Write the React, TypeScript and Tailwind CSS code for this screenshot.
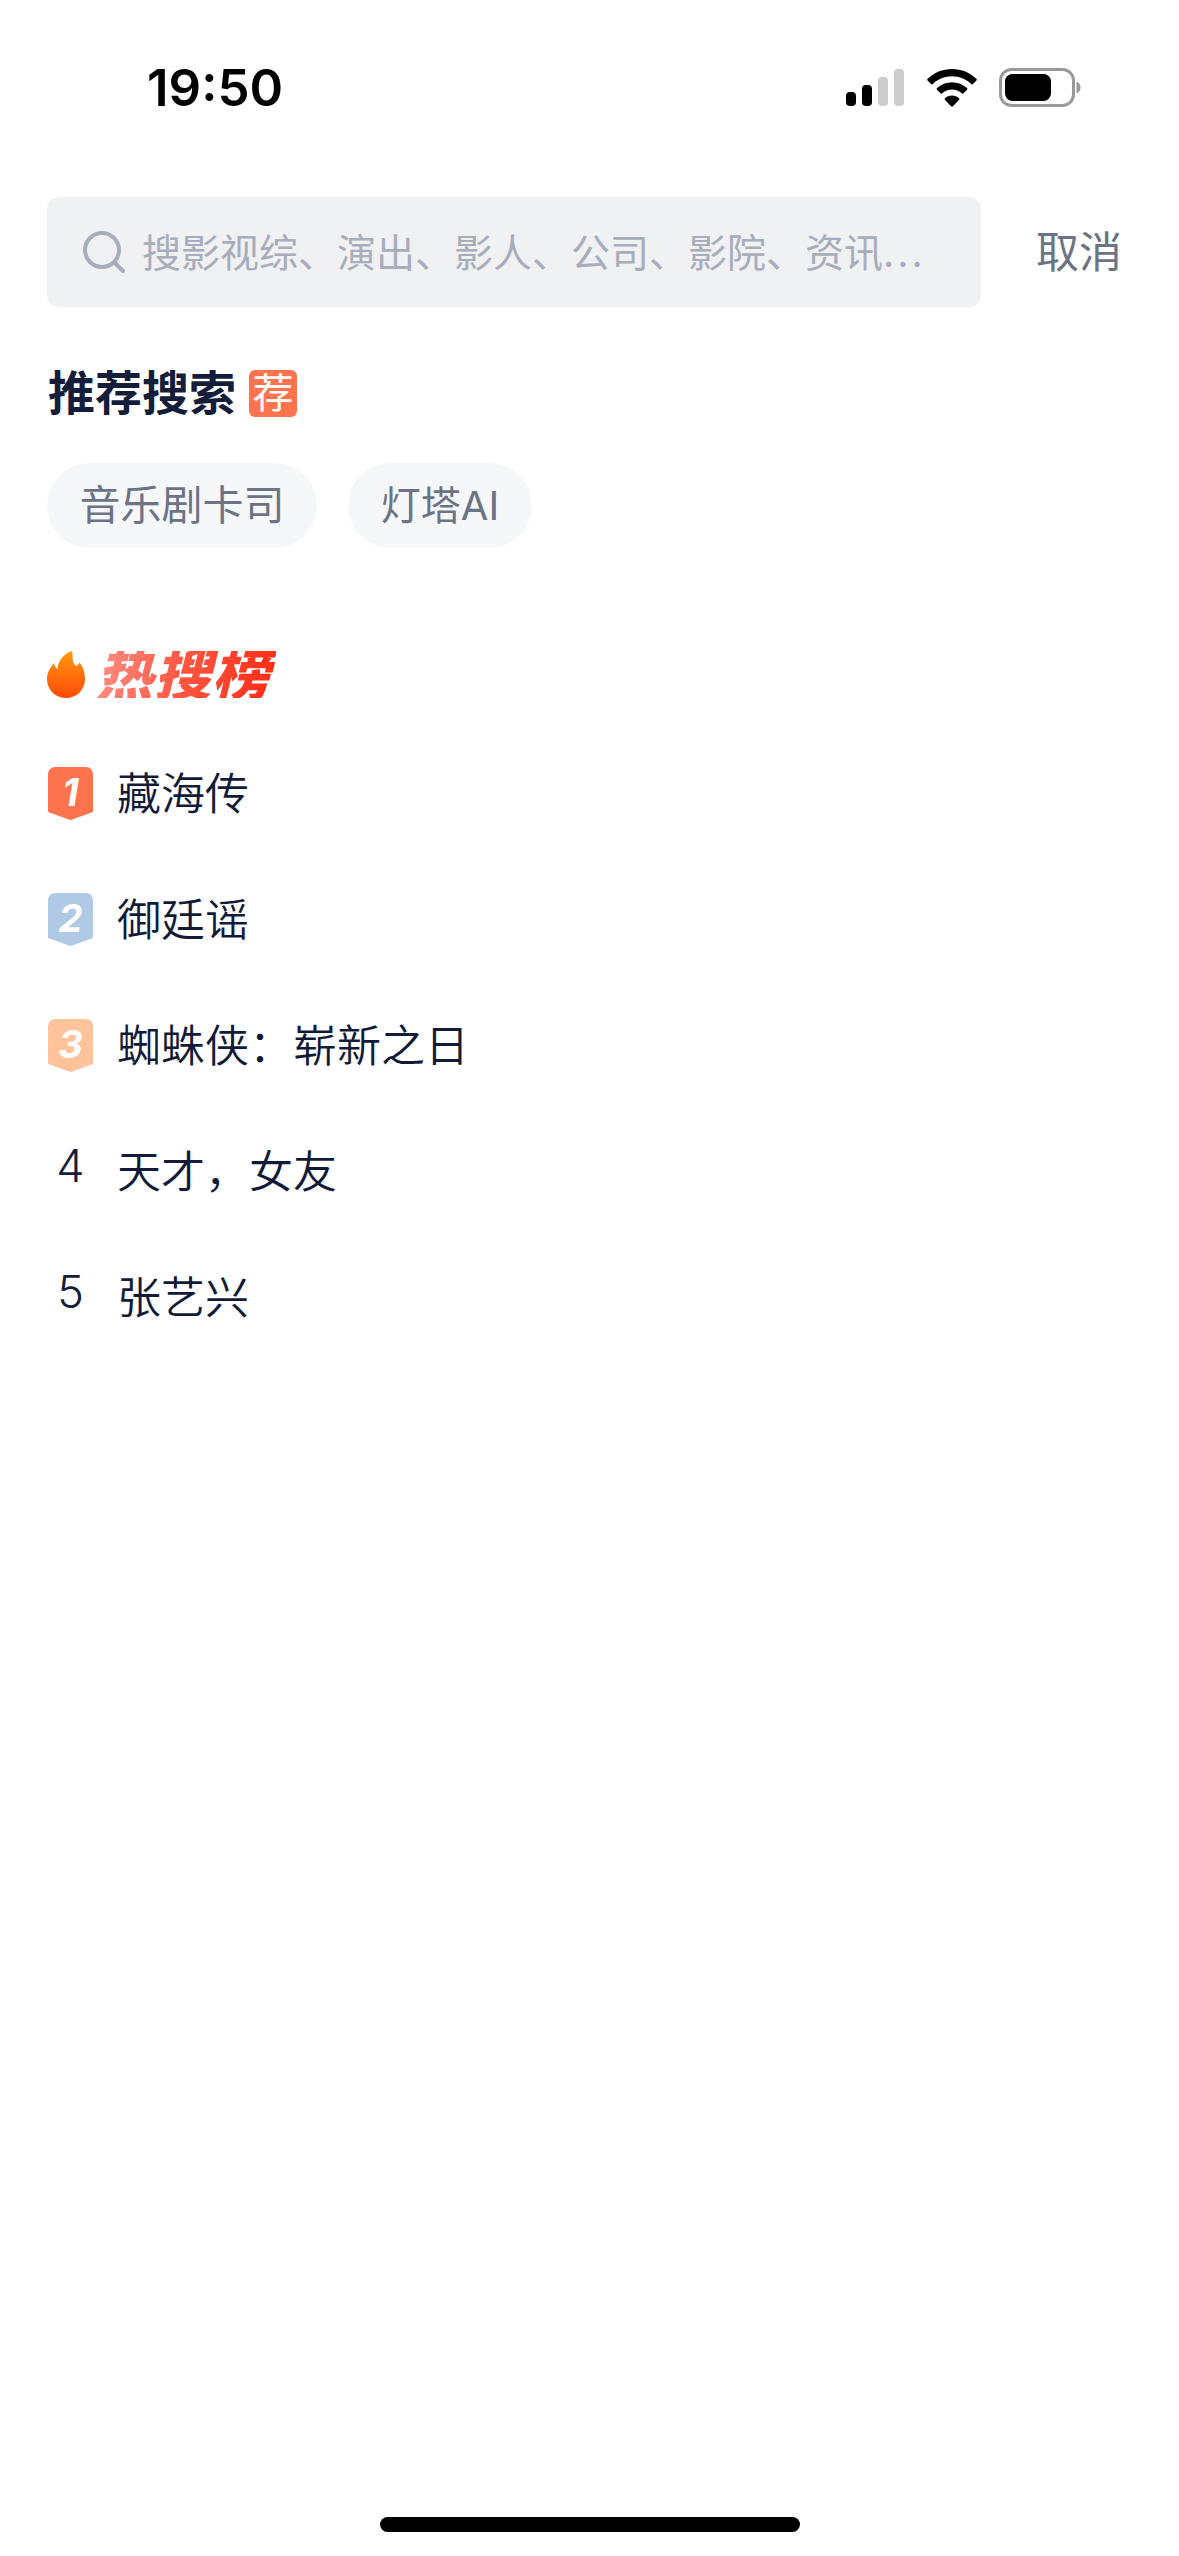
const RANKS = [
  { label: '藏海传', top: 1 },
  { label: '御廷谣', top: 2 },
  { label: '蜘蛛侠：崭新之日', top: 3 },
  { label: '天才，女友' },
  { label: '张艺兴' },
]

const SHIELD_COLORS: Record<number, string> = {
  1: 'text-[#ff734f]',
  2: 'text-[#b0c9e4]',
  3: 'text-[#ffc39b]',
}

function StatusIcons() {
  return (
    <div className="flex items-center">
      <svg width="58" height="38" viewBox="0 0 58 38">
        <rect x="0" y="23" width="10" height="14" rx="4" fill="#000" />
        <rect x="16" y="16" width="10" height="21" rx="4" fill="#000" />
        <rect x="32" y="8" width="10" height="29" rx="4" fill="#ccc" />
        <rect x="48" y="0" width="10" height="37" rx="4" fill="#ccc" />
      </svg>
      <svg className="ml-[23px]" width="50" height="38" viewBox="0 0 50 38">
        <path d="M25 0C15.5 0 7 3.7 0.6 9.8c-.5.5-.5 1.2 0 1.7l3.4 3.5c.5.5 1.2.5 1.7 0C10.8 10.2 17.6 7.3 25 7.3s14.2 2.9 19.3 7.7c.5.5 1.2.5 1.7 0l3.4-3.5c.5-.5.5-1.2 0-1.7C43 3.7 34.500 0 25 0z" fill="#000" />
        <path d="M25 13.200c-5.800 0-11 2.200-15 5.900-.5.500-.5 1.200 0 1.700l3.500 3.500c.5.500 1.200.5 1.700 0 2.600-2.300 6-3.800 9.800-3.800s7.200 1.500 9.800 3.800c.5.500 1.200.5 1.700 0l3.500-3.500c.5-.5.5-1.200 0-1.700-4-3.700-9.200-5.900-15-5.900z" fill="#000" />
        <path d="M25 26.500c-2.700 0-5.200 1-7 2.700-.5.500-.5 1.200 0 1.700l6.100 6.300c.5.500 1.300.5 1.800 0l6.100-6.300c.5-.5.5-1.200 0-1.700-1.800-1.700-4.300-2.700-7-2.700z" fill="#000" />
      </svg>
      <svg className="ml-[22px]" width="82" height="39" viewBox="0 0 82 39">
        <rect x="1.500" y="1.500" width="73" height="36" rx="11" fill="none" stroke="#999" strokeWidth="3" />
        <rect x="6" y="6" width="46" height="27" rx="7.500" fill="#000" />
        <path d="M77.500 13.500c2.500.8 4 3.200 4 6s-1.500 5.200-4 6z" fill="#999" />
      </svg>
    </div>
  )
}

function RankBadge({ rank }: { rank: number }) {
  return (
    <div className={`relative h-[53px] w-[45px] ${SHIELD_COLORS[rank]}`}>
      <svg className="absolute inset-0" width="45" height="53" viewBox="0 0 45 53">
        <path
          d="M7 0h31a7 7 0 0 1 7 7v36.500c0 1-.5 1.700-1.400 2.100L23.500 52.800c-.7.200-1.300.200-2 0L1.400 45.600C.5 45.200 0 44.500 0 43.500V7a7 7 0 0 1 7-7z"
          fill="currentColor"
        />
      </svg>
      <span className="absolute inset-x-0 top-[5px] text-center font-['Inter',sans-serif] text-[38px] leading-[40px] font-bold text-white italic">
        {rank}
      </span>
    </div>
  )
}

export default function App() {
  return (
    <div className="h-[2556px] w-[1179px] overflow-hidden bg-white font-['Inter','Noto_Sans_CJK_SC',sans-serif]">
      <div className="flex h-[197px] items-start justify-between pt-[68px] pr-[98px] pl-[147px]">
        <span className="text-[51px] leading-[40px] font-semibold text-black">19:50</span>
        <StatusIcons />
      </div>

      <div className="flex items-center pl-[47px]">
        <div className="flex h-[110px] w-[934px] items-center rounded-[12px] bg-[#f0f1f3] pl-[36px]">
          <svg width="42" height="42" viewBox="0 0 42 42" fill="none" stroke="#a8adbb" strokeWidth="4" strokeLinecap="round">
            <circle cx="19" cy="19" r="17" />
            <path d="M32 32l8 8" />
          </svg>
          <span className="ml-[17px] text-[39px] leading-none text-[#a8adbb]">
            搜影视综、演出、影人、公司、影院、资讯<span className="tracking-[3px]">...</span>
          </span>
        </div>
        <span className="ml-[55px] text-[43px] leading-none text-[#6b7385]">取消</span>
      </div>

      <div className="mt-[62px] flex items-center pl-[48px]">
        <h2 className="text-[47px] leading-[48px] font-bold text-[#141d3a]">推荐搜索</h2>
        <span className="ml-[13px] flex h-[47px] w-[48px] items-center justify-center rounded-[6px] bg-[#ff734f] text-[41px] leading-none text-white">荐</span>
      </div>

      <div className="mt-[46px] flex gap-[31px] pl-[47px]">
        <span className="flex h-[85px] w-[270px] items-center justify-center rounded-full bg-[#f6f7f9] text-[41px] text-[#6b7385]">音乐剧卡司</span>
        <span className="flex h-[85px] w-[184px] items-center justify-center rounded-full bg-[#f6f7f9] text-[40px] text-[#6b7385]">灯塔AI</span>
      </div>

      <div className="mt-[103px] flex items-center pl-[47px]">
        <svg width="38" height="47" viewBox="0 0 38 47">
          <defs>
            <linearGradient id="flame" x1="0" y1="0" x2="0" y2="1">
              <stop offset="0" stopColor="#ff9a0c" />
              <stop offset="1" stopColor="#ff4a0a" />
            </linearGradient>
          </defs>
          <path
            d="M25 0c1.500 7-1 10 4 15 2-1 3-2 3.500-3.500C36 16 38 21 38 28c0 11-8.500 19-19 19S0 39 0 28c0-7 3.500-11.500 7-16 .5 3 1.500 5 3.500 6.500C10.500 11 16 3 25 0z"
            fill="url(#flame)"
          />
        </svg>
        <span className="ml-[11px] bg-[linear-gradient(100deg,#ff8f86_0%,#ff5a45_45%,#ff2a12_100%)] bg-clip-text pr-[6px] text-[57px] leading-[47px] font-black tracking-[1px] text-transparent italic">
          热搜榜
        </span>
      </div>

      <ol className="mt-[69px] flex flex-col gap-[73px] pl-[48px]">
        {RANKS.map((item, i) => (
          <li key={item.label} className="flex h-[53px] items-center">
            <div className="flex w-[45px] justify-center">
              {item.top ? (
                <RankBadge rank={item.top} />
              ) : (
                <span className="-mt-[12px] font-['Inter',sans-serif] text-[45px] leading-none font-light text-[#141d3a]">{i + 1}</span>
              )}
            </div>
            <span className="ml-[24px] text-[44px] leading-none font-[350] text-[#111a38]">{item.label}</span>
          </li>
        ))}
      </ol>

      <div className="fixed bottom-[24px] left-[380px] h-[15px] w-[420px] rounded-full bg-black" />
    </div>
  )
}
